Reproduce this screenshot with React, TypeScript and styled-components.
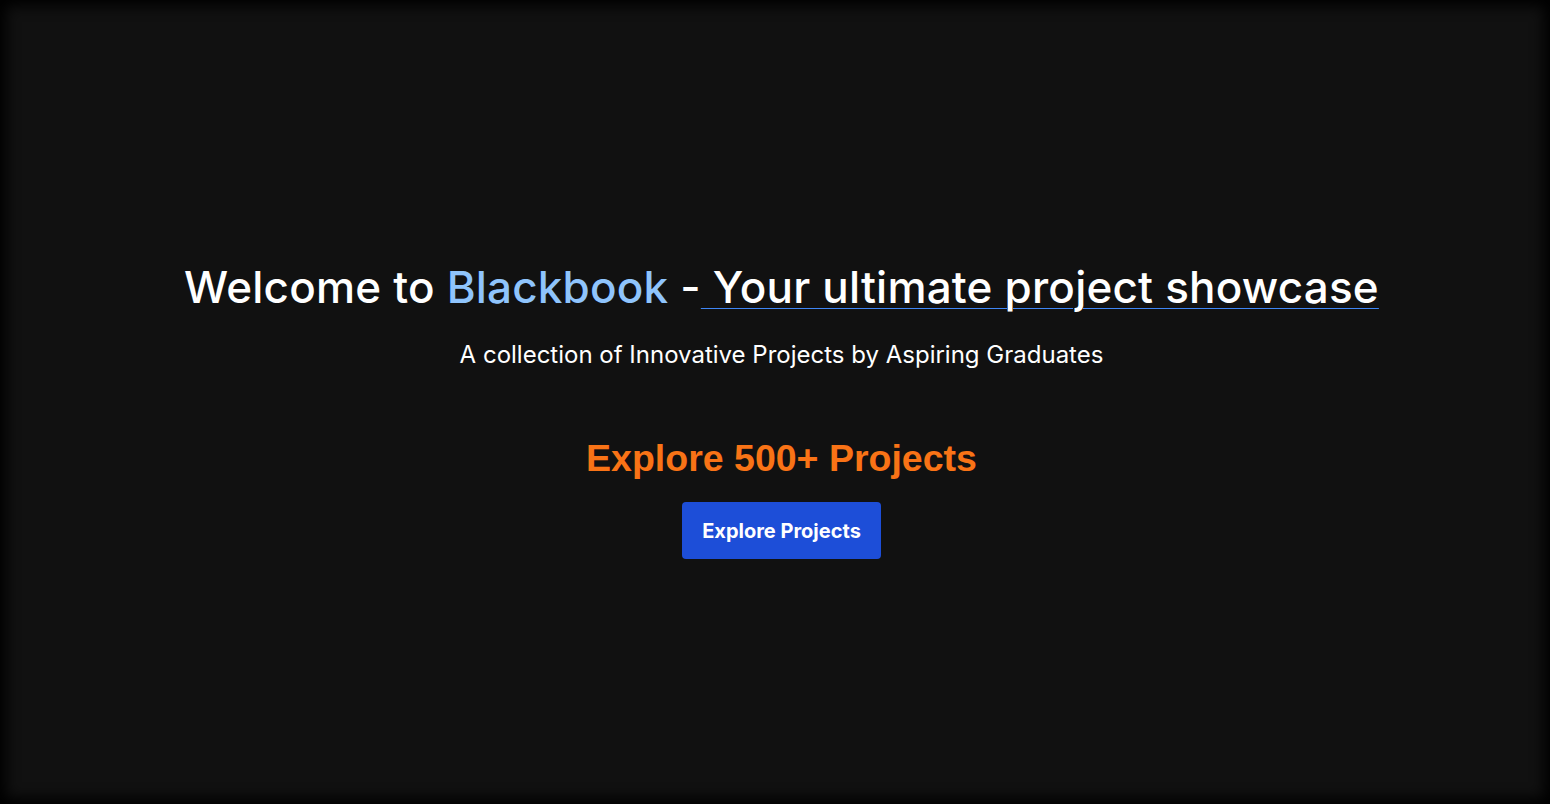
import React from "react";
import styled, { createGlobalStyle } from "styled-components";

const GlobalStyle = createGlobalStyle`
  html, body {
    margin: 0;
    padding: 0;
    background: #000;
  }

  * {
    box-sizing: border-box;
  }
`;

const Page = styled.main`
  min-height: 100vh;
  height: 804px;
  display: flex;
  flex-direction: column;
  align-items: center;
  padding: 261px 0 0 13px;
  background: #111111;
  box-shadow: inset 0 0 14px 6px #000;
  font-family: Inter, "Noto Sans", sans-serif;
  color: #ffffff;
`;

const Title = styled.h1`
  margin: 0;
  font-weight: 500;
  font-size: 44px;
  line-height: 52px;
  letter-spacing: 0.2px;
  text-align: center;
`;

const Brand = styled.span`
  color: #8fc4fc;
`;

const Tagline = styled.span`
  text-decoration-line: underline;
  text-decoration-color: #3f86f5;
  text-decoration-thickness: 1px;
  text-underline-offset: 5px;
`;

const Subtitle = styled.p`
  margin: 26px 0 0;
  font-weight: 400;
  font-size: 24px;
  line-height: 32px;
  letter-spacing: 0;
  text-align: center;
`;

const Count = styled.h2`
  margin: 66px 0 0;
  font-family: "Liberation Sans", Arial, sans-serif;
  font-weight: 700;
  font-size: 37.5px;
  line-height: 42px;
  color: #f97316;
`;

const Button = styled.button`
  margin-top: 23px;
  width: 199px;
  height: 57px;
  border: none;
  border-radius: 4px;
  background: #1d4ed8;
  color: #ffffff;
  font-family: Inter, "Noto Sans", sans-serif;
  font-weight: 700;
  font-size: 20px;
  letter-spacing: 0;
  cursor: pointer;
`;

const App: React.FC = () => {
  return (
    <>
      <GlobalStyle />
      <Page>
        <Title>
          Welcome to <Brand>Blackbook</Brand> -
          <Tagline> Your ultimate project showcase</Tagline>
        </Title>
        <Subtitle>A collection of Innovative Projects by Aspiring Graduates</Subtitle>
        <Count>Explore 500+ Projects</Count>
        <Button>Explore Projects</Button>
      </Page>
    </>
  );
};

export default App;
